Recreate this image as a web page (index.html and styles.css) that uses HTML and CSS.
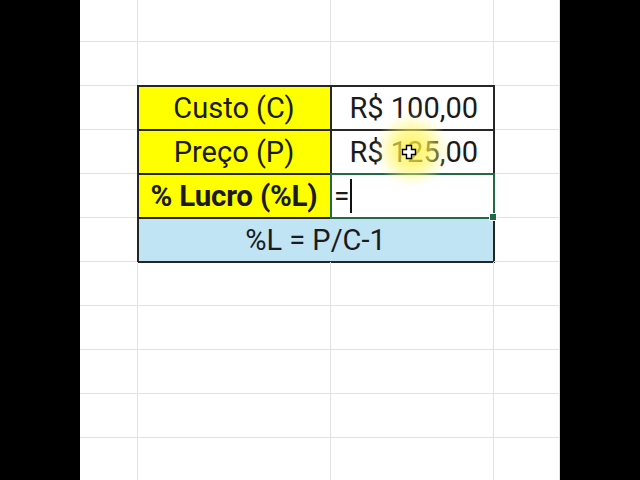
FILE: index.html
```html
<!DOCTYPE html>
<html>
<head>
<meta charset="utf-8">
<link rel="stylesheet" href="styles.css">
</head>
<body>
<div class="sheet">
  <div class="cell"></div><div class="cell"></div><div class="cell"></div><div class="cell"></div>
  <div class="cell"></div><div class="cell"></div><div class="cell"></div><div class="cell"></div>
  <div class="cell"></div><div class="cell label">Custo (C)</div><div class="cell value">R$ 100,00</div><div class="cell"></div>
  <div class="cell"></div><div class="cell label">Preço (P)</div><div class="cell value">R$ 125,00</div><div class="cell"></div>
  <div class="cell"></div><div class="cell label bold">% Lucro (%L)</div><div class="cell value editing"><span class="eq">=</span><span class="caret"></span><span class="handle"></span></div><div class="cell"></div>
  <div class="cell"></div><div class="cell formula">%L = P/C-1</div><div class="cell"></div>
  <div class="cell"></div><div class="cell"></div><div class="cell"></div><div class="cell"></div>
  <div class="cell"></div><div class="cell"></div><div class="cell"></div><div class="cell"></div>
  <div class="cell"></div><div class="cell"></div><div class="cell"></div><div class="cell"></div>
  <div class="cell"></div><div class="cell"></div><div class="cell"></div><div class="cell"></div>
  <div class="cell"></div><div class="cell"></div><div class="cell"></div><div class="cell"></div>
  <div class="glow"></div>
  <svg class="pointer" width="16" height="16" viewBox="0 0 16 16">
    <path d="M5.5 1.5h5v4h4v5h-4v4h-5v-4h-4v-5h4z" fill="#fff" stroke="#000" stroke-width="1.4"/>
  </svg>
</div>
</body>
</html>
```

FILE: styles.css
```css
html, body {
  margin: 0;
  padding: 0;
  background: #000;
}
body {
  width: 640px;
  height: 480px;
  overflow: hidden;
}
.sheet {
  position: relative;
  width: 480px;
  height: 480px;
  margin: 0 auto;
  background: #fff;
  overflow: hidden;
  display: grid;
  grid-template-columns: 58px 193px 163px 66px;
  grid-template-rows: 42px repeat(10, 44px);
  font-family: Roboto, "Liberation Sans", sans-serif;
  color: #1b1b1b;
}
.cell {
  box-sizing: border-box;
  border-right: 1px solid #e2e2e2;
  border-bottom: 1px solid #e2e2e2;
  display: flex;
  align-items: center;
  font-size: 29px;
  white-space: nowrap;
  position: relative;
}
.label {
  background: #ffff00;
  justify-content: center;
  outline: 2px solid #262626;
  outline-offset: -1px;
  border-color: transparent;
}
.bold {
  font-weight: 700;
  font-size: 29.5px;
  letter-spacing: -0.2px;
}
.value {
  justify-content: flex-end;
  padding-right: 15px;
  outline: 2px solid #262626;
  outline-offset: -1px;
  border-color: transparent;
}
.formula {
  grid-column: 2 / span 2;
  background: #c0e4f4;
  justify-content: center;
  outline: 2px solid #262626;
  outline-offset: -1px;
  border-color: transparent;
}
.editing {
  justify-content: flex-start;
  padding-left: 3px;
  outline: 2px solid #1f6b47;
  outline-offset: -1px;
  z-index: 2;
}
.eq {
  font-size: 28px;
  line-height: 1;
}
.caret {
  width: 2px;
  height: 34px;
  background: #111;
  margin-left: 1px;
}
.handle {
  position: absolute;
  right: -4px;
  bottom: -4px;
  width: 6px;
  height: 6px;
  background: #1f6b47;
  border: 1px solid #fff;
}
.glow {
  position: absolute;
  left: 294px;
  top: 112px;
  width: 76px;
  height: 76px;
  border-radius: 50%;
  background: radial-gradient(closest-side, rgba(255, 240, 60, 0.85), rgba(255, 245, 90, 0.6) 50%, rgba(255, 250, 140, 0.25) 80%, rgba(255, 255, 160, 0) 100%);
  pointer-events: none;
  z-index: 3;
}
.pointer {
  position: absolute;
  left: 321px;
  top: 144px;
  z-index: 4;
}
```
